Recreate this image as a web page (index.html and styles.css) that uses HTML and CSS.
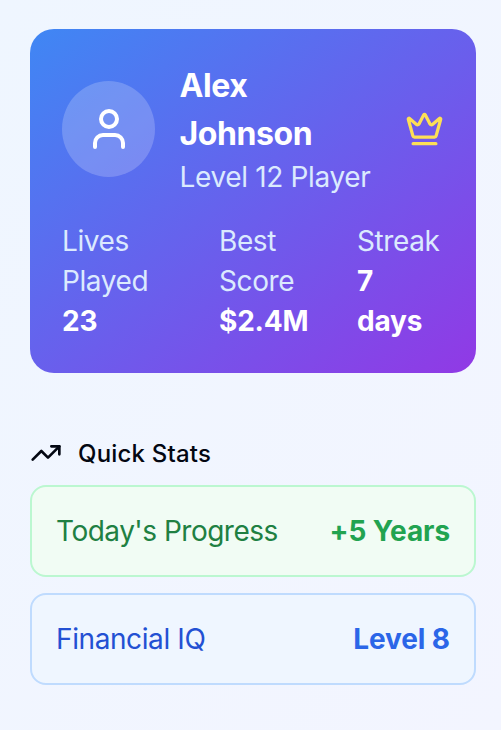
FILE: index.html
```
<!DOCTYPE html>
<html lang="en">
<head>
    <meta charset="utf-8">
    <title>Player Profile</title>
    <link rel="stylesheet" href="styles.css">
</head>
<body>

    <!-- Player card -->
    <div class="profile">
        <div class="profile-top">
            <div class="avatar">
                <svg class="icon-user" viewBox="0 0 24 24">
                    <path d="M19 21v-2a4 4 0 0 0-4-4H9a4 4 0 0 0-4 4v2"/>
                    <circle cx="12" cy="7" r="4"/>
                </svg>
            </div>
            <div class="who">
                <h1>Alex<br>Johnson</h1>
                <p>Level 12 Player</p>
            </div>
            <svg class="icon-crown" viewBox="0 0 24 24">
                <path d="M11.562 3.266a.5.5 0 0 1 .876 0L15.39 8.87a1 1 0 0 0 1.516.294L21.183 5.5a.5.5 0 0 1 .798.519l-2.834 10.246a1 1 0 0 1-.956.734H5.81a1 1 0 0 1-.957-.734L2.02 6.02a.5.5 0 0 1 .798-.519l4.276 3.664a1 1 0 0 0 1.516-.294z"/>
                <path d="M5 21h14"/>
            </svg>
        </div>

        <div class="numbers">
            <div>
                <p class="label">Lives<br>Played</p>
                <p class="value">23</p>
            </div>
            <div>
                <p class="label">Best<br>Score</p>
                <p class="value">$2.4M</p>
            </div>
            <div>
                <p class="label">Streak</p>
                <p class="value">7<br>days</p>
            </div>
        </div>
    </div>

    <!-- Quick stats -->
    <div class="stats">
        <h2>
            <svg class="icon-trend" viewBox="0 0 24 24">
                <polyline points="22 7 13.5 15.5 8.5 10.5 2 17"/>
                <polyline points="16 7 22 7 22 13"/>
            </svg>
            <span>Quick Stats</span>
        </h2>
        <div class="stat green">
            <span class="name">Today's Progress</span>
            <b>+5 Years</b>
        </div>
        <div class="stat blue">
            <span class="name">Financial IQ</span>
            <b>Level 8</b>
        </div>
    </div>

</body>
</html>
```
FILE: styles.css
```
* {
    box-sizing: border-box;
}

body {
    margin: 0;
    min-height: 730px;
    padding: 29px 25px 0 30px;
    background: linear-gradient(to bottom right, #eff6ff, #f3f5ff);
    font-family: Inter, "Liberation Sans", sans-serif;
    font-size: 28px;
    line-height: 40px;
}

h1, h2, p {
    margin: 0;
}

svg {
    display: block;
    flex: none;
    fill: none;
    stroke: currentColor;
    stroke-width: 2;
    stroke-linecap: round;
    stroke-linejoin: round;
}

/* player card */
.profile {
    height: 344px;
    padding: 32px;
    border-radius: 24px;
    background: linear-gradient(to bottom right, #3f87f4, #9139e5);
    color: #ffffff;
}

.profile-top {
    display: flex;
    align-items: center;
    margin-bottom: 24px;
}

.avatar {
    display: flex;
    align-items: center;
    justify-content: center;
    width: 93px;
    height: 96px;
    border-radius: 50%;
    background: rgba(255, 255, 255, 0.2);
}

.icon-user {
    width: 48px;
    height: 48px;
}

.who {
    flex: 1;
    margin-left: 24.5px;
    white-space: nowrap;
}

.who h1 {
    height: 96px;
    padding-top: 1px;
    font-size: 32px;
    font-weight: 700;
    line-height: 48px;
    letter-spacing: -0.4px;
}

.who p,
.label {
    color: #dbeafe;
    letter-spacing: -0.35px;
}

.icon-crown {
    width: 39px;
    height: 40px;
    color: #fddf56;
}

.numbers {
    display: grid;
    grid-template-columns: 157px 138px 1fr;
}

.label {
    letter-spacing: -0.4px;
}

.value {
    font-weight: 700;
    letter-spacing: -0.2px;
}

/* quick stats */
.stats {
    display: flex;
    flex-direction: column;
    gap: 16px;
    margin-top: 64px;
}

.stats h2 {
    display: flex;
    align-items: center;
    gap: 16px;
    height: 32px;
    color: #030712;
    font-size: 24px;
    font-weight: 500;
    line-height: 32px;
    letter-spacing: 0.2px;
}

.stats h2 span {
    padding-top: 2px;
}

.icon-trend {
    width: 32px;
    height: 32px;
}

.stat {
    display: flex;
    align-items: center;
    justify-content: space-between;
    height: 92px;
    padding: 0 24px;
    border: 2px solid;
    border-radius: 16px;
}

.stat .name {
    letter-spacing: -0.5px;
}

.stat b {
    letter-spacing: -0.1px;
}

.green {
    border-color: #bbf7d0;
    background: #f1fcf4;
    color: #208042;
}

.green b {
    color: #22a350;
}

.blue {
    border-color: #bfdbfe;
    background: #eff6ff;
    color: #2350d3;
}

.blue .name {
    letter-spacing: -0.4px;
}

.blue b {
    color: #2b66e8;
}
```
